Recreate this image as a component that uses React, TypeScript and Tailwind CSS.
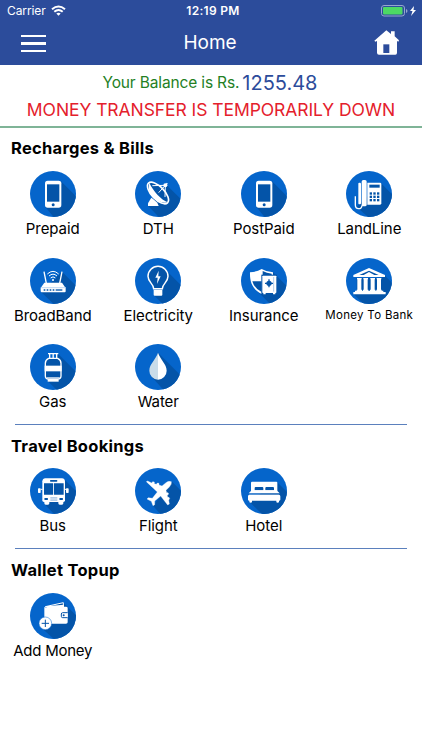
import React from 'react';

type Service = {
    label: string;
    icon: React.ReactNode;
    shadow?: string;
    labelClass?: string;
};

const DEEP = '#0454a8';

const Badge = ({ id, shadow, children }: { id: string; shadow?: string; children: React.ReactNode }) => (
    <svg className="block w-[46px] h-[46px]" viewBox="0 0 138 138" fill="none">
        <clipPath id={id}>
            <circle cx="69" cy="69" r="69" />
        </clipPath>
        <g clipPath={`url(#${id})`}>
            <rect width="138" height="138" fill="#0565cb" />
            {shadow && <path d={shadow} fill={DEEP} />}
        </g>
        {children}
    </svg>
);

const Phone = () => (
    <>
        <rect x="45" y="29" width="49" height="81" rx="8" fill="#fff" />
        <rect x="51" y="40" width="37" height="52" fill={DEEP} />
        <circle cx="69.5" cy="101" r="4.5" fill={DEEP} />
    </>
);

const Dish = () => (
    <>
        <ellipse cx="69" cy="66" rx="41" ry="19" transform="rotate(46 69 66)" fill={DEEP} stroke="#fff" strokeWidth="5" />
        <path d="M43 36C37 55 47 78 66 88c12 7 24 9 32 6C78 86 56 62 43 36Z" fill="#fff" />
        <path d="M52 44 91 43 90 78M71 65 91 43" stroke="#fff" strokeWidth="3" />
        <circle cx="91" cy="43" r="6" fill="#fff" />
        <path d="M92 42 97 37" stroke="#fff" strokeWidth="4" />
        <path d="M49 80 39 97v8h32l-4-10-10-9Z" fill="#fff" />
    </>
);

const Telephone = () => (
    <>
        <rect x="37" y="35" width="8" height="65" rx="3" fill="#fff" />
        <rect x="47" y="27" width="15" height="79" rx="5" fill="#fff" />
        <path d="M28 76v26c0 14 20 15 20 1" stroke="#fff" strokeWidth="4" />
        <path d="M64 35h38q4 0 4 4v58q0 4-4 4H64Z" fill="#fff" />
        <rect x="70" y="41" width="31" height="9" fill={DEEP} />
        {[64, 74, 84].map((y) => (
            <g key={y} fill={DEEP}>
                <rect x="71" y={y} width="7" height="7" />
                <rect x="82" y={y} width="7" height="7" />
                <rect x="93" y={y} width="7" height="7" />
            </g>
        ))}
    </>
);

const Router = () => (
    <>
        <path d="m42 41 7 35M96 41l-7 35" stroke="#fff" strokeWidth="4" />
        <path d="M43 74h53l11 16H32Z" fill="#fff" />
        <rect x="32" y="87" width="75" height="16" rx="3" fill="#fff" />
        <path d="M33 89h73" stroke="#9fc4eb" strokeWidth="2" />
        <path d="M41 96h34" stroke={DEEP} strokeWidth="4" strokeDasharray="5 4" />
        <path d="M77 96h20" stroke={DEEP} strokeWidth="4" />
        <path d="M52 48q17-16 34 0M57 54q12-11 24 0M62 60q7-7 14 0" stroke="#fff" strokeWidth="3" />
        <circle cx="69" cy="66" r="3" fill="#fff" />
    </>
);

const Bulb = () => (
    <>
        <path d="M56 92c0-15-17-19-17-37a30 30 0 0 1 60 0c0 18-17 22-17 37Z" fill={DEEP} stroke="#fff" strokeWidth="4.5" />
        <path d="M71 38 61 59h7l-2 19 11-23h-7Z" fill="#fff" />
        <path d="M56 95h26v15q0 3-3 3H59q-3 0-3-3Z" fill="#fff" />
    </>
);

const Insurance = () => (
    <>
        <path d="M62 33q15 9 34 10c1 33-8 51-34 65C36 94 26 76 27 43q20-1 35-10Z" fill="#fff" />
        <path d="M62 70v32Q39 90 34 70Z" fill={DEEP} />
        <path d="M65 39q12 7 27 8v5H65Z" fill={DEEP} />
        <path d="M61 50h47v59H61Z" fill={DEEP} />
        <rect x="64" y="53" width="42" height="52" rx="2" fill="#fff" />
        <path d="M67 105h7v4h-7zM96 105h7v4h-7z" fill="#fff" />
        <path d="M98 57v44" stroke="#8ab4e1" strokeWidth="2" />
        <circle cx="84" cy="76" r="8" fill={DEEP} />
        <path d="M84 64v24M72 76h24" stroke={DEEP} strokeWidth="4" />
    </>
);

const Bank = () => (
    <>
        <path d="M69 30 117 51v6H22v-6Z" fill="#fff" />
        <path d="m69 38 29 13H40Z" fill={DEEP} />
        <path d="m69 42 16 9H53Z" fill="#fff" />
        <path d="M32 60h74v38H32Z" fill={DEEP} />
        <path d="M33 60h14v4h-1v31h2v4H32v-4h2V64h-1zM52 60h14v4h-1v31h2v4H51v-4h2V64h-1zM73 60h14v4h-1v31h2v4H72v-4h2V64h-1zM92 60h14v4h-1v31h2v4H91v-4h2V64h-1z" fill="#fff" />
        <path d="M27 98h85v4h7v7H22v-7h5Z" fill="#fff" />
    </>
);

const Cylinder = () => (
    <>
        <path d="M54 29h31M59 30v12M69.5 30v12M80 30v12" stroke="#fff" strokeWidth="4" />
        <path d="M56 43h27q10 5 10 15v38q0 9-10 10H56q-10-1-10-10V58q0-10 10-15Z" fill={DEEP} stroke="#fff" strokeWidth="4" />
        <path d="M44 65h51v17H44z" fill="#fff" />
        <path d="M53 107h33v6H53z" fill="#fff" />
        <path d="M50 102h39" stroke="#fff" strokeWidth="4" />
    </>
);

const Drop = () => (
    <>
        <path d="M69 26C62 47 43 60 43 80a26 27 0 0 0 26 27Z" fill="#c9dce9" />
        <path d="M69 26c7 21 26 34 26 54a26 27 0 0 1-26 27Z" fill="#fff" />
    </>
);

const Bus = () => (
    <>
        <path d="M46 31h50q8 0 9 9v57q0 5-5 5H42q-5 0-5-5V40q1-9 9-9Z" fill="#fff" />
        <path d="M43 101h15v5q0 4-4 4h-7q-4 0-4-4zM85 101h15v5q0 4-4 4h-7q-4 0-4-4z" fill="#fff" />
        <rect x="24" y="61" width="8" height="14" rx="2" fill="#fff" />
        <rect x="108" y="61" width="8" height="14" rx="2" fill="#fff" />
        <path d="M32 64h6M104 64h6" stroke="#fff" strokeWidth="3" />
        <rect x="60" y="36" width="22" height="5" rx="2" fill={DEEP} />
        <path d="M42 46h27.5v34H42zM72 46h29v34H72z" fill={DEEP} />
        <rect x="43" y="90" width="11" height="6" rx="2" fill={DEEP} />
        <rect x="88" y="90" width="11" height="6" rx="2" fill={DEEP} />
        <path d="M61 89h21M61 93h21M61 97h21" stroke="#7aa7d8" strokeWidth="2" />
    </>
);

const Plane = () => (
    <path
        d="M109 41Q101 38 93 44L81 54 72 51V46L67 45 64 49 58 47V42L53 41 50 45 38 39 34 41 67 72 52 91 40 89 36 93 49 100 54 113 59 110V99L77 84 98 111 103 108 101 96 104 92 102 88H98L97 82 101 78 99 74H95L93 67 103 57Q111 49 109 41Z"
        fill="#fff"
        stroke="#fff"
        strokeWidth="1"
        strokeLinejoin="round"
    />
);

const Bed = () => (
    <>
        <path d="M33 41h73q3 0 3 3v25H30V44q0-3 3-3Z" fill="#fff" />
        <path d="M41 67v-7q0-3 3-3h20q3 0 3 3v7zM73 67v-7q0-3 3-3h20q3 0 3 3v7z" fill={DEEP} />
        <path d="M32 67h75l9 9H23Z" fill="#fff" />
        <path d="M24 78h91" stroke="#4b88c9" strokeWidth="2.5" />
        <path d="M25 80h89q4 0 4 5v10q0 3-4 3v3q0 3-4 3t-4-3v-3H33v3q0 3-4 3t-4-3v-3q-4 0-4-3V85q0-5 4-5Z" fill="#fff" />
    </>
);

const WalletAdd = () => (
    <>
        <path d="M46 41 100 29v12Z" fill={DEEP} stroke="#fff" strokeWidth="3" />
        <path d="m55 39 47-4v7H49Z" fill="#fff" />
        <path d="M43 42q5 3 10-1h55q5 0 5 4v43q0 4-5 4H48q-5 0-5-4Z" fill="#fff" />
        <path d="M113 59H98q-4 0-4 4v7q0 4 4 4h15" fill="#fff" stroke={DEEP} strokeWidth="3" />
        <circle cx="101" cy="66.5" r="3" fill={DEEP} />
        <circle cx="46" cy="91" r="19" fill="#fff" />
        <circle cx="46" cy="91" r="19" stroke="#0565cb" strokeWidth="1.5" />
        <path d="M46 80v22M35 91h22" stroke={DEEP} strokeWidth="3" />
    </>
);

const bills: Service[] = [
    { label: 'Prepaid', icon: <Phone />, shadow: 'M93 31 150 88V150H81L46 108Z' },
    { label: 'DTH', icon: <Dish />, shadow: 'M92 39 150 97V150H83L40 105Z' },
    { label: 'PostPaid', icon: <Phone />, shadow: 'M93 31 150 88V150H81L46 108Z' },
    { label: 'LandLine', icon: <Telephone />, shadow: 'M105 37 150 82V150H80L32 108Z' },
    { label: 'BroadBand', icon: <Router />, shadow: 'M96 41 150 95V150H84L34 103Z' },
    { label: 'Electricity', icon: <Bulb />, shadow: 'M90 34 150 94V150H95L57 112Z' },
    { label: 'Insurance', icon: <Insurance />, shadow: 'M96 43 150 97V150H100L46 97Z' },
    {
        label: 'Money To Bank',
        icon: <Bank />,
        shadow: 'M117 53 150 86V150H65L23 108Z',
        labelClass: 'text-[11.5px] tracking-[0.3px]',
    },
    { label: 'Gas', icon: <Cylinder />, shadow: 'M84 29 150 95V150H93L53 111Z' },
    { label: 'Water', icon: <Drop />, shadow: 'M69 26 150 107V150H97L51 100Z' },
];

const travel: Service[] = [
    { label: 'Bus', icon: <Bus />, shadow: 'M104 35 150 81V150H84L43 108Z' },
    { label: 'Flight', icon: <Plane />, shadow: 'M111 41 150 80V150H86L54 113Z' },
    { label: 'Hotel', icon: <Bed />, shadow: 'M108 42 150 84V150H75L25 101Z' },
];

const wallet: Service[] = [
    {
        label: 'Add Money',
        icon: <WalletAdd />,
        shadow: 'M101 30 150 79V150H85L34 104Z',
        labelClass: 'text-[15px] tracking-[-0.25px]',
    },
];

const Section = ({ title, services, gridClass = 'pt-[11px]' }: { title: string; services: Service[]; gridClass?: string }) => (
    <section>
        <h2 className="pl-[11px] h-6 leading-6 text-[16.5px] font-bold tracking-[0.28px]">{title}</h2>
        <div className={`grid grid-cols-4 gap-y-[16.5px] ${gridClass}`}>
            {services.map((s) => (
                <div key={s.label} className="flex flex-col items-center h-[70px]">
                    <Badge id={`badge-${s.label.replace(/ /g, '-')}`} shadow={s.shadow}>
                        {s.icon}
                    </Badge>
                    <span className={`h-6 leading-[23px] whitespace-nowrap ${s.labelClass ?? 'text-[15px] tracking-[-0.07px]'}`}>
                        {s.label}
                    </span>
                </div>
            ))}
        </div>
    </section>
);

const Divider = () => <div className="h-px mt-[10px] mb-[9px] mx-[15px] bg-[#5b80bd]" />;

export default function App() {
    return (
        <div className="w-full h-[750px] overflow-hidden bg-white text-black font-['Inter','Liberation_Sans',sans-serif]">
            <header className="h-[65px] bg-[#2c4c9b] text-white">
                <div className="grid grid-cols-3 items-center h-[22px] px-[7px]">
                    <div className="flex items-center gap-[6px] text-[12px] leading-none">
                        <span className="tracking-[-0.1px]">Carrier</span>
                        <svg className="w-[15px] h-[11px] -ml-px -mt-px" viewBox="0 0 15 11" fill="none" stroke="#fff" strokeWidth="2">
                            <path d="M1 4.2q6.500-5.500 13 0M3.300 6.800q4.200-3.600 8.400 0" />
                            <path d="M5.300 8.600q2.200-1.700 4.400 0L7.500 10.800Z" fill="#fff" stroke="none" />
                        </svg>
                    </div>
                    <span className="pl-1 text-center text-[12px] leading-none font-semibold tracking-[0.3px]">12:19 PM</span>
                    <div className="flex items-center justify-end -mr-[2px]">
                        <svg className="w-[36px] h-[12px]" viewBox="0 0 36 12" fill="none">
                            <rect x=".5" y=".5" width="23" height="10.5" rx="2.5" stroke="#96a6ce" />
                            <rect x="2" y="2" width="19.5" height="7.5" rx="1" fill="#4cd964" />
                            <path d="M25 4v4q1.500-.5 1.500-2T25 4Z" fill="#96a6ce" />
                            <path d="m33 1-4 5h2.500L30 11l5-6h-2.500Z" fill="#fff" />
                        </svg>
                    </div>
                </div>
                <div className="flex items-center justify-between h-[43px] pl-[21px] pr-[23px]">
                    <div className="flex flex-col gap-[5px] w-[25px]">
                        <span className="h-[2.5px] bg-white" />
                        <span className="h-[2.5px] bg-white" />
                        <span className="h-[2.5px] bg-white" />
                    </div>
                    <h1 className="pb-[2px] text-[19px] leading-none">Home</h1>
                    <svg className="w-[25px] h-[25px] -mt-[3px]" viewBox="0 0 75 75" fill="#fff">
                        <path d="M37 1 1 32l3 3 5-2v35q0 6 6 6h49q5 0 5-6V33l4 2 2-4-13-12V4H51v8Z" />
                        <path d="M28 43h18v26H28z" fill="#2c4c9b" />
                    </svg>
                </div>
            </header>

            <div className="h-[61px] pt-[4px]">
                <div className="flex items-center justify-center h-[27px] gap-[3px] pr-[2px] whitespace-nowrap">
                    <span className="text-[15.5px] tracking-[-0.15px] text-[#248024]">Your Balance is Rs.</span>
                    <span className="text-[20px] text-[#2c4c9b]">1255.48</span>
                </div>
                <p className="text-center text-[17.5px] leading-[27px] tracking-[-0.07px] whitespace-nowrap text-[#e4202b]">
                    MONEY TRANSFER IS TEMPORARILY DOWN
                </p>
            </div>
            <div className="h-[2px] bg-[#7fb497]" />

            <main className="pt-2">
                <Section title="Recharges & Bills" services={bills} />
                <Divider />
                <Section title="Travel Bookings" services={travel} gridClass="pt-[10px]" />
                <Divider />
                <Section title="Wallet Topup" services={wallet} />
            </main>
        </div>
    );
}
